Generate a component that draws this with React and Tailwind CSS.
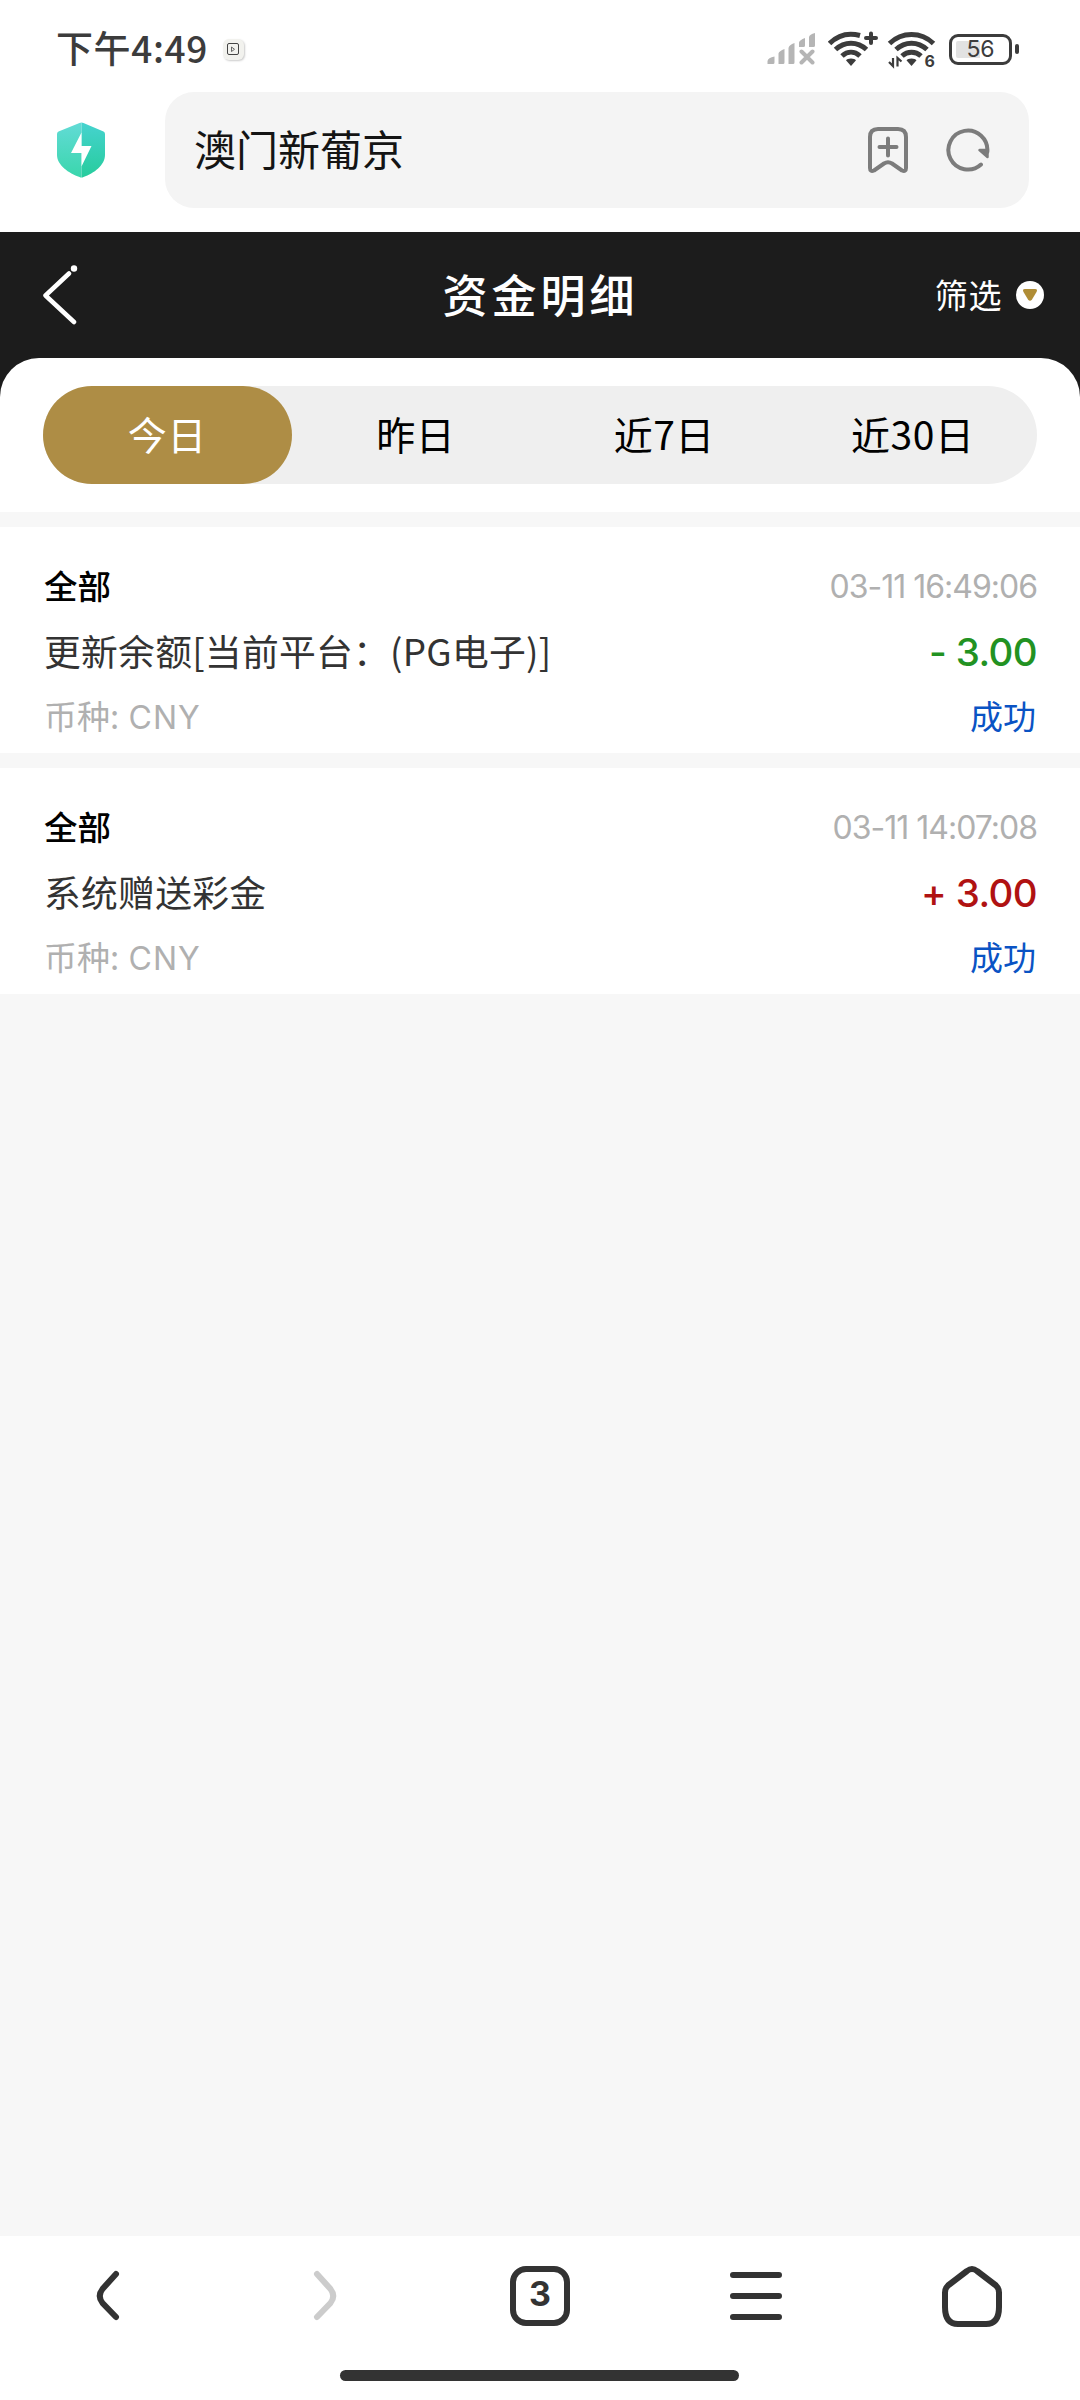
import clsx from 'clsx';

const RANGES = ['今日', '昨日', '近7日', '近30日'];

const RECORDS = [
  { id: 1, type: '全部', time: '03-11 16:49:06', desc: '更新余额[当前平台：(PG电子)]', amount: '- 3.00', income: false, currency: 'CNY', status: '成功' },
  { id: 2, type: '全部', time: '03-11 14:07:08', desc: '系统赠送彩金', amount: '+ 3.00', income: true, currency: 'CNY', status: '成功' },
];

// ── Status bar icons ──────────────────────────────────────────────────────────
function SignalIcon() {
  return (
    <svg width="49" height="32" viewBox="0 0 49 32" fill="#b5b5b5">
      <path d="M.5 31v-3q.5-3.500 7-4.500v6q0 1.500-1.500 1.500zM11.500 31V20.500q.5-2.500 6-4.500v13.500q0 1.500-1.500 1.500zM21.500 31V15q.5-3 6-5v19.500q0 1.500-1.500 1.500z" />
      <path d="M32 14V9.500q.5-2.500 6-4.500v7.500q0 1.500-1.500 1.500zM42 14V4q.5-2.500 6-4v12.500q0 1.500-1.500 1.500z" />
      <path d="M34.500 18.500l11 11m0-11l-11 11" stroke="#b5b5b5" strokeWidth="4" strokeLinecap="round" />
    </svg>
  );
}

function WifiPlusIcon() {
  return (
    <svg width="50" height="36" viewBox="0 0 50 36" fill="none" stroke="#3c3c3c" strokeWidth="5">
      <path d="M1.500 12.500C10 4 21 1.500 32 4.500M7.500 18.500c9-8.500 22-8.500 31 0M14 25c5.500-5 12.500-5 18 0" />
      <path d="M23 27.500c2.500 0 4 .8 5 1.800L23 35l-5-5.700c1-1 2.500-1.800 5-1.800z" fill="#3c3c3c" stroke="none" />
      <path d="M43 2.500v9.500M38 7h10" strokeWidth="4" strokeLinecap="round" />
    </svg>
  );
}

function WifiSixIcon() {
  return (
    <svg className="overflow-visible" width="48" height="36" viewBox="0 0 48 36" fill="none" stroke="#3c3c3c" strokeWidth="5">
      <path d="M1.500 12.500c12.500-12 31.500-12 44 0M8 18.500c9-8.500 22-8.500 31 0M14 25c5.500-5 13.500-5 19 0" />
      <path d="M23.500 27.500c2.500 0 4 .8 5 1.800l-5 5.700-5-5.700c1-1 2.500-1.800 5-1.800z" fill="#3c3c3c" stroke="none" />
      <path d="M1 31l4 4V27M13.500 30.500l-4-3.500v8.500" strokeWidth="2.200" />
      <text x="36.500" y="35.500" fontFamily="Inter, sans-serif" fontSize="16" fontWeight="700" fill="#3c3c3c" stroke="none">6</text>
    </svg>
  );
}

function StatusBar() {
  return (
    <div className="flex h-[92px] items-center pl-[56px] pr-[61px] pt-[6px]">
      <span className="relative -top-[2px] text-[37px] font-medium leading-none tracking-[0.6px] text-[#3c3c3c]">下午4:49</span>
      <span className="ml-[15px] flex size-[21px] items-center justify-center rounded-[6px] bg-[#f2f2ee] shadow-[1px_1px_2px_#ccc]">
        <svg width="12" height="12" viewBox="0 0 12 12" fill="none" stroke="#444">
          <rect x=".5" y=".5" width="11" height="11" rx="1.500" />
          <path d="M4.500 4v4.500l3-2.200z" strokeWidth=".8" />
        </svg>
      </span>
      <div className="ml-auto flex items-center">
        <SignalIcon />
        <span className="ml-[12px]"><WifiPlusIcon /></span>
        <span className="ml-[10px]"><WifiSixIcon /></span>
        <span className="ml-[13px] flex h-[31px] w-[63px] items-center justify-center rounded-[9px] border-[3px] border-[#3c3c3c] bg-linear-to-r from-[#e2e2e2] from-50% to-white to-50% bg-clip-content p-[4px] font-[Inter] text-[23px] leading-none text-[#3c3c3c]">
          56
        </span>
        <span className="ml-[3px] h-[10px] w-[4px] rounded-full bg-[#3c3c3c]" />
      </div>
    </div>
  );
}

// ── Browser address bar ───────────────────────────────────────────────────────
function AddressBar() {
  return (
    <div className="flex h-[140px] items-start pl-[57px] pr-[51px]">
      <svg className="mt-[30px] shrink-0" width="49" height="56" viewBox="0 0 49 56">
        <defs>
          <linearGradient id="shieldL" x1="0" y1="0" x2="0" y2="1">
            <stop offset="0" stopColor="#62dbd6" />
            <stop offset="1" stopColor="#3ad6ac" />
          </linearGradient>
          <linearGradient id="shieldR" x1="0" y1="0" x2="0" y2="1">
            <stop offset="0" stopColor="#46d3cf" />
            <stop offset="1" stopColor="#26cc9c" />
          </linearGradient>
        </defs>
        <path d="M24.500.5q-1 0-2 .5L1.500 9.500Q0 10.200 0 12v21c0 10 12 18.500 22.500 22q1 .5 2 .5z" fill="url(#shieldL)" />
        <path d="M24.500.5q1 0 2 .5l20 8.500q1.500.7 1.500 2.500v21c0 10-11 18.500-21.500 22q-1 .5-2 .5z" fill="url(#shieldR)" />
        <path d="M24.500 10.500L14 31h10.500v13.500L34.500 24H24.500z" fill="#fff" />
      </svg>
      <div className="ml-[59px] flex h-[116px] flex-1 items-center rounded-[29px] bg-[#f4f4f4] pl-[29px] pr-[39px]">
        <span className="relative -top-[2px] text-[42px] leading-none text-[#141414]">澳门新葡京</span>
        <svg className="ml-auto" width="42" height="48" viewBox="0 0 42 48" fill="none" stroke="#7c7c7c" strokeWidth="4" strokeLinecap="round" strokeLinejoin="round">
          <path d="M11 3h20q8 0 8 8v31q0 4-4 2.500l-10-7q-4-2.500-8 0l-10 7Q3 46 3 42V11q0-8 8-8z" />
          <path d="M21 12.500v17M12.500 21h17" />
        </svg>
        <svg className="ml-[37px]" width="44" height="44" viewBox="0 0 44 44" fill="none" stroke="#7c7c7c" strokeWidth="4" strokeLinecap="round">
          <path d="M35 36.500A19.500 19.500 0 1 1 41.300 24" />
          <path d="M33.500 22h8v7z" fill="#7c7c7c" strokeWidth="2.500" strokeLinejoin="round" />
        </svg>
      </div>
    </div>
  );
}

// ── Page header ───────────────────────────────────────────────────────────────
function PageHeader() {
  return (
    <header className="grid h-[126px] grid-cols-[1fr_auto_1fr] items-center pl-[40px] pr-[36px] text-white">
      <svg width="40" height="60" viewBox="0 0 40 60" fill="none" stroke="#fff" strokeWidth="4.500" strokeLinecap="round" strokeLinejoin="round">
        <path d="M29 8.500L5.500 30.500 34 57" />
        <circle cx="34" cy="3.500" r="3.200" fill="#fff" stroke="none" />
      </svg>
      <h1 className="pb-[4px] pr-[3px] text-[45px] font-medium leading-none tracking-[4px]">资金明细</h1>
      <div className="flex items-center justify-end">
        <span className="pb-[2px] text-[33px] leading-none tracking-[0.6px]">筛选</span>
        <span className="ml-[14px] flex size-[28px] items-center justify-center rounded-full bg-white">
          <svg width="14" height="12" viewBox="0 0 14 12" fill="#b08d35">
            <path d="M2 0h10q3 0 1.500 3L9 10.500q-2 2.500-4 0L.5 3Q-1 0 2 0z" />
          </svg>
        </span>
      </div>
    </header>
  );
}

function RangeTabs({ active }) {
  return (
    <div className="rounded-t-[39px] bg-white px-[43px] py-[28px]">
      <div className="grid h-[98px] grid-cols-4 rounded-full bg-[#efefef]">
        {RANGES.map((label) => (
          <button
            key={label}
            className={clsx(
              'flex items-center justify-center rounded-full pb-[3px] text-[39px] leading-none tracking-[0.5px]',
              label === active ? 'bg-[#ae8d45] text-white' : 'text-black',
            )}
          >
            {label}
          </button>
        ))}
      </div>
    </div>
  );
}

function RecordRow({ record }) {
  return (
    <li className="flex h-[226px] justify-between bg-white pl-[44px] pr-[43px] pt-[26px]">
      <div className="flex flex-col">
        <span className="text-[33.500px] font-medium leading-[64px] text-black">{record.type}</span>
        <span className="text-[36.800px] leading-[67px] tracking-[0.25px] text-[#333]">{record.desc}</span>
        <span className="text-[33px] leading-[62px] text-[#b0b0b0]">
          币种: <span className="ml-[2px] font-[Inter] text-[32px] tracking-[1px]">{record.currency}</span>
        </span>
      </div>
      <div className="flex flex-col items-end">
        <span className="h-[64px] font-[Inter] text-[32px] leading-[67px] tracking-[-1px] text-[#b0b0b0]">{record.time}</span>
        <span className={clsx('h-[67px] font-[Inter] text-[38.500px] font-medium leading-[70px] tracking-[-0.6px]', record.income ? 'text-[#b01212]' : 'text-[#229222]')}>
          {record.amount}
        </span>
        <span className="pr-[1px] text-[33px] leading-[62px] text-[#0a53c4]">{record.status}</span>
      </div>
    </li>
  );
}

// ── Browser bottom toolbar ────────────────────────────────────────────────────
function BottomBar() {
  return (
    <nav className="flex h-[164px] flex-col items-center bg-white">
      <div className="grid h-[120px] w-full grid-cols-5 place-items-center">
        <svg width="64" height="64" viewBox="0 0 64 64" fill="none" stroke="#333" strokeWidth="6" strokeLinecap="round">
          <path d="M40 10L26.500 25q-5.500 7 0 14L40 53" />
        </svg>
        <svg width="64" height="64" viewBox="0 0 64 64" fill="none" stroke="#ccc" strokeWidth="6" strokeLinecap="round">
          <path d="M25 10l13.500 15q5.500 7 0 14L25 53" />
        </svg>
        <span className="flex size-[60px] items-center justify-center rounded-[16px] border-[6px] border-[#333] pb-[5px] font-[Inter] text-[34px] font-bold leading-none text-[#333]">
          3
        </span>
        <svg width="64" height="64" viewBox="0 0 64 64" fill="none" stroke="#333" strokeWidth="6" strokeLinecap="round">
          <path d="M9 11h46M9 32h46M9 53h46" />
        </svg>
        <svg width="64" height="64" viewBox="0 0 64 64" fill="none" stroke="#333" strokeWidth="6" strokeLinejoin="round">
          <path d="M27 7q5-4 10 0l19 14.500q3 3 3 7V43q0 17-13 17H18Q5 60 5 43V28.500q0-4 3-7z" />
        </svg>
      </div>
      <div className="mr-[1px] mt-[14px] h-[11px] w-[399px] rounded-full bg-[#333]" />
    </nav>
  );
}

export default function App() {
  return (
    <div className="flex h-[2400px] w-[1080px] flex-col overflow-hidden bg-[#f7f7f7] font-['Noto_Sans_CJK_SC',sans-serif]">
      <div className="bg-white">
        <StatusBar />
        <AddressBar />
      </div>
      <div className="bg-[#1c1c1c]">
        <PageHeader />
        <RangeTabs active="今日" />
      </div>
      <ul className="mt-[15px] flex flex-1 flex-col gap-[15px]">
        {RECORDS.map((record) => (
          <RecordRow key={record.id} record={record} />
        ))}
      </ul>
      <BottomBar />
    </div>
  );
}
